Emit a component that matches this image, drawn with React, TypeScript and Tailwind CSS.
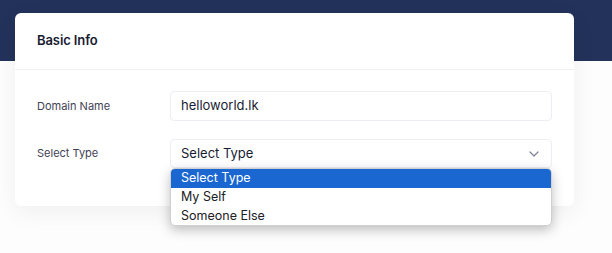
import React from "react";

export default function App() {
  return (
    <div
      className="w-[612px] h-[253px] overflow-hidden pt-[13px] bg-[linear-gradient(to_bottom,#22325a_61px,#fdfdfd_61px)]"
      style={{ fontFamily: "Inter, 'Noto Sans', sans-serif" }}
    >
      <div className="ml-[15px] w-[559px] bg-white rounded-[6px] shadow-[0_6px_24px_rgba(0,0,0,0.06)]">
        <div className="h-[57px] px-[22px] flex items-center border-b border-[#eff2f5]">
          <h3 className="text-[13px] font-semibold text-[#181c32] tracking-[-0.1px]">Basic Info</h3>
        </div>
        <div className="px-[22px] pt-[21px] pb-[38px] flex flex-col gap-[18px]">
          <div className="flex items-center">
            <label className="w-[133px] text-[11px] text-[#3f4254]">Domain Name</label>
            <div className="flex-1 h-[30px] border border-[#eceef3] rounded-[4px] px-[10px] flex items-center text-[13px] text-[#181c32]">
              helloworld.lk
            </div>
          </div>
          <div className="flex items-start">
            <label className="w-[133px] text-[11px] text-[#3f4254] pt-[6px]">Select Type</label>
            <div className="flex-1 relative">
              <div className="h-[29px] border border-[#eceef3] rounded-[4px] px-[10px] flex items-center justify-between text-[13px] text-[#181c32]">
                <span>Select Type</span>
                <svg width="10" height="6" viewBox="0 0 10 6" className="mr-[2px]">
                  <path d="M1 1l4 4 4-4" fill="none" stroke="#7e8299" strokeWidth="1.2" strokeLinecap="round" strokeLinejoin="round" />
                </svg>
              </div>
              <div className="absolute left-0 right-0 top-[29px] bg-white rounded-[5px] border border-[#d0d0d0] shadow-[0_4px_12px_rgba(0,0,0,0.25)] overflow-hidden text-[12.5px] text-[#202124]">
                <div className="h-[19px] bg-[#1a67d2] text-white px-[10px] flex items-center">Select Type</div>
                <div className="h-[19px] px-[10px] flex items-center">My Self</div>
                <div className="h-[18px] px-[10px] flex items-center">Someone Else</div>
              </div>
            </div>
          </div>
        </div>
      </div>
    </div>
  );
}
